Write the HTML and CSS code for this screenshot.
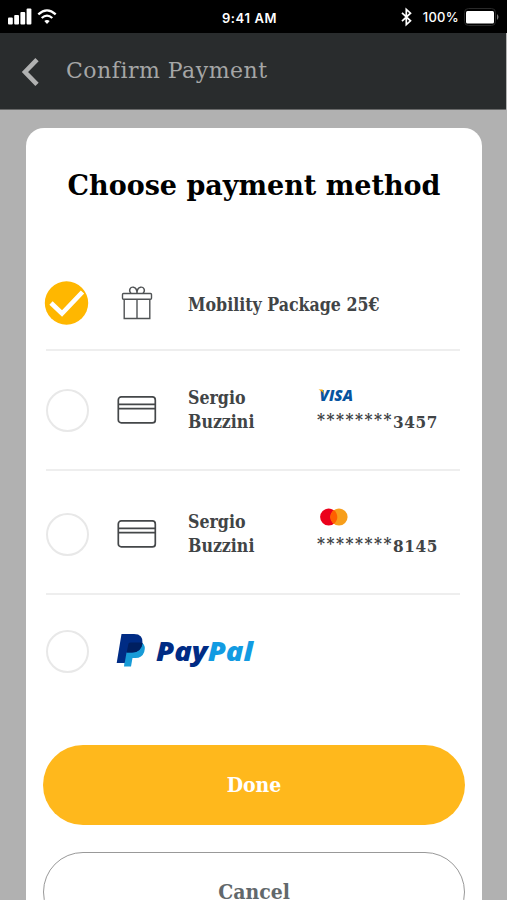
FILE: index.html
```html
<!DOCTYPE html>
<html lang="en">
<head>
<meta charset="utf-8">
<title>Confirm Payment</title>
<link rel="stylesheet" href="styles.css">
</head>
<body>
<div class="status">
  <div class="status-left">
    <svg class="signal" width="24" height="17" viewBox="0 0 24 17" fill="#fff"><rect x="0" y="9.500" width="4.800" height="7" rx="1"/><rect x="6.200" y="7" width="4.800" height="9.500" rx="1"/><rect x="12.400" y="4" width="4.800" height="12.500" rx="1"/><rect x="18.600" y="0.500" width="4.800" height="16" rx="1"/></svg>
    <svg class="wifi" width="20" height="16" viewBox="0 0 20 16" fill="none" stroke="#fff" stroke-width="2.300"><path d="M1.300 5.400Q10-2.600 18.700 5.400M4.700 9Q10 4.300 15.300 9"/><path d="M7.300 12Q10 9.800 12.700 12L10 14.900z" fill="#fff" stroke="none"/></svg>
  </div>
  <div class="time">9:41 AM</div>
  <div class="status-right">
    <svg width="11" height="18" viewBox="0 0 11 18" fill="none" stroke="#fff" stroke-width="1.700"><path d="M1 4.800L9.500 12.800L5.300 16.600V1.400L9.500 5.200L1 13.200"/></svg>
    <span class="percent">100%</span>
    <svg class="battery" width="36" height="18" viewBox="0 0 36 18"><rect x=".5" y=".5" width="31" height="17" rx="4" fill="none" stroke="#292929"/><rect x="2" y="3" width="28" height="12.500" rx="1.500" fill="#fff"/><path d="M33 6q3 3 0 6z" fill="#777"/></svg>
  </div>
</div>
<header class="header">
  <svg class="back" width="17" height="28" viewBox="0 0 17 28" fill="none" stroke="#b0b1b1" stroke-width="4.600"><path d="M15 1.600L3 14L15 26.400"/></svg>
  <h1>Confirm Payment</h1>
</header>
<main class="dialog">
  <h2>Choose payment method</h2>
  <div class="methods">
    <div class="method method-package">
      <svg class="check" width="44" height="44" viewBox="0 0 44 44"><circle cx="21.500" cy="22" r="21.700" fill="#ffb700"/><path d="M6 22L17 32.500L37.500 11" fill="none" stroke="#fff" stroke-width="4.700"/></svg>
      <svg class="icon" width="40" height="36" viewBox="0 0 40 36" fill="none" stroke="#505355" stroke-width="1.400"><rect x="5.500" y="8.500" width="29" height="5.700" rx="1"/><path d="M7.200 14.200V33.500H32.800V14.200M20 14.200V33.500M14 8.500C11 5 13.500 1.700 16.500 2.200C19 2.600 20 5 20 8.500C20 5 21 2.600 23.500 2.200C26.500 1.700 29 5 26 8.500"/></svg>
      <span class="name">Mobility Package 25€</span>
    </div>
    <div class="method">
      <span class="radio"></span>
      <svg class="icon" width="40" height="30" viewBox="0 0 40 30" fill="none" stroke="#444749" stroke-width="1.700"><rect x="1.300" y="1.900" width="37" height="26" rx="3"/><path d="M1.300 9.300H38.300M1.300 13.700H38.300"/></svg>
      <span class="name">Sergio<br>Buzzini</span>
      <div class="account account-visa">
        <svg width="36" height="14" viewBox="0 0 36 14"><text x="0.500" y="12.500" class="visa" textLength="33.500" lengthAdjust="spacingAndGlyphs">VISA</text><path d="M-.5 1.500H3.500L5.700 7Q3.500 3 -.5 1.500" fill="#f7a600"/></svg>
        <div class="digits"><span class="stars">********</span><span>3457</span></div>
      </div>
    </div>
    <div class="method method-second">
      <span class="radio"></span>
      <svg class="icon" width="40" height="30" viewBox="0 0 40 30" fill="none" stroke="#444749" stroke-width="1.700"><rect x="1.300" y="1.900" width="37" height="26" rx="3"/><path d="M1.300 9.300H38.300M1.300 13.700H38.300"/></svg>
      <span class="name">Sergio<br>Buzzini</span>
      <div class="account account-master">
        <svg width="30" height="18" viewBox="0 0 30 18"><circle cx="9.700" cy="9" r="8.600" fill="#eb001b"/><circle cx="20" cy="9" r="8.600" fill="#f79e1b"/><path d="M14.850 2.100a8.600 8.600 0 0 1 0 13.800a8.600 8.600 0 0 1 0-13.800" fill="#ff5f00"/></svg>
        <div class="digits"><span class="stars">********</span><span>8145</span></div>
      </div>
    </div>
    <div class="method method-paypal">
      <span class="radio"></span>
      <svg class="paypal" width="138" height="38" viewBox="0 0 138 38"><path d="M9.500 11H25.500Q29 14 27.200 20Q25 26 18.500 26H15.500L14 34.500H7z" fill="#179bd7"/><path d="M4.500 2H17Q26.500 2 25.500 11.500Q24 21 14 20.500H9.500L7.700 31H-.3z" fill="#002c85"/><path d="M11.500 11.500Q12 10.500 14 10.500H23Q24.600 10.500 25.500 11.500Q24 21 14 20.500H9.700z" fill="#001f60"/><text x="39" y="29" class="wordmark" textLength="97" lengthAdjust="spacingAndGlyphs"><tspan fill="#002c85">Pay</tspan><tspan fill="#129be2">Pal</tspan></text></svg>
    </div>
  </div>
  <button class="button done">Done</button>
  <button class="button cancel">Cancel</button>
</main>
</body>
</html>
```
FILE: styles.css
```css
* { box-sizing: border-box; }
html { height: 100%; overflow: hidden; }
body {
  margin: 0;
  height: 900px;
  overflow: hidden;
  background: #b1b1b1;
  font-family: "DejaVu Serif Condensed", "DejaVu Serif", serif;
  font-stretch: semi-condensed;
  color: #414446;
}
svg { display: block; flex: none; overflow: visible; }
.status {
  display: grid;
  grid-template-columns: 1fr auto 1fr;
  align-items: center;
  height: 33px;
  padding: 0 7px 0 8px;
  background: #000;
  color: #fff;
  font-family: Inter, sans-serif;
  font-stretch: normal;
}
.status-left, .status-right { display: flex; align-items: center; }
.status-left { gap: 5px; }
.status-right { justify-content: flex-end; }
.time { margin-right: 9px; font-size: 13px; font-weight: 600; letter-spacing: .6px; padding-top: 2px; }
.percent { margin: 1px 5px 0 11px; font-size: 13px; font-weight: 500; letter-spacing: .3px; }
.header {
  display: flex;
  align-items: center;
  width: 506px;
  height: 77px;
  padding: 1px 0 0 22px;
  border-bottom: 1px solid #676868;
  background: #292c2d;
}
.header h1 {
  margin: 0 0 1px 27px;
  color: #a5a6a6;
  font-family: "DejaVu Serif", serif;
  font-stretch: normal;
  font-size: 22px;
  font-weight: 400;
  line-height: 30px;
  letter-spacing: .5px;
}
.dialog {
  width: 456px;
  height: 772px;
  margin: 18px 0 0 26px;
  padding: 38px 17px 0;
  border-radius: 18px 18px 0 0;
  background: #fff;
  overflow: hidden;
}
.dialog h2 {
  margin: 0;
  color: #000;
  font-family: "DejaVu Serif", serif;
  font-stretch: normal;
  font-size: 27px;
  line-height: 40px;
  text-align: center;
  white-space: nowrap;
}
.methods { margin: 51px 5px 0 2px; }
.method {
  display: grid;
  grid-template-columns: 71px 71px 129px 1fr;
  align-items: center;
  height: 120px;
  margin-left: 1px;
  border-bottom: 2px solid #eee;
}
.method-package { height: 94px; grid-template-columns: 71px 71px 1fr; }
.method-package .name { padding-top: 5px; }
.check { margin-left: -1px; }
.method-second { height: 124px; padding-top: 4px; }
.method-paypal { height: 112px; grid-template-columns: 71px 1fr; border: 0; }
.radio { width: 43px; height: 43px; border: 2px solid #e8e8e8; border-radius: 50%; }
.name { font-size: 17.600px; font-weight: 700; line-height: 24.500px; white-space: nowrap; }
.digits { display: flex; margin-top: 8px; font-size: 17px; font-weight: 700; line-height: 24px; letter-spacing: .6px; }
.stars { margin-top: -3px; margin-bottom: 3px; letter-spacing: 1.500px; }
.account svg { margin-left: 2px; }
.account-visa { padding-top: 1px; }
.account-master { margin-top: -2px; }
.visa { font: italic 800 15px "Open Sans", sans-serif; fill: #07549f; }
.wordmark { font: italic 800 26px "Open Sans", sans-serif; }
.button {
  display: block;
  width: 422px;
  height: 80px;
  padding: 0 0 2px;
  border: 0;
  border-radius: 40px;
  font-family: inherit;
  font-size: 21px;
  font-weight: 700;
}
.done { margin-top: 38px; background: #ffb81c; color: #fff; }
.cancel { margin-top: 27px; border: 1px solid #999; background: #fff; color: #62686b; }
```
